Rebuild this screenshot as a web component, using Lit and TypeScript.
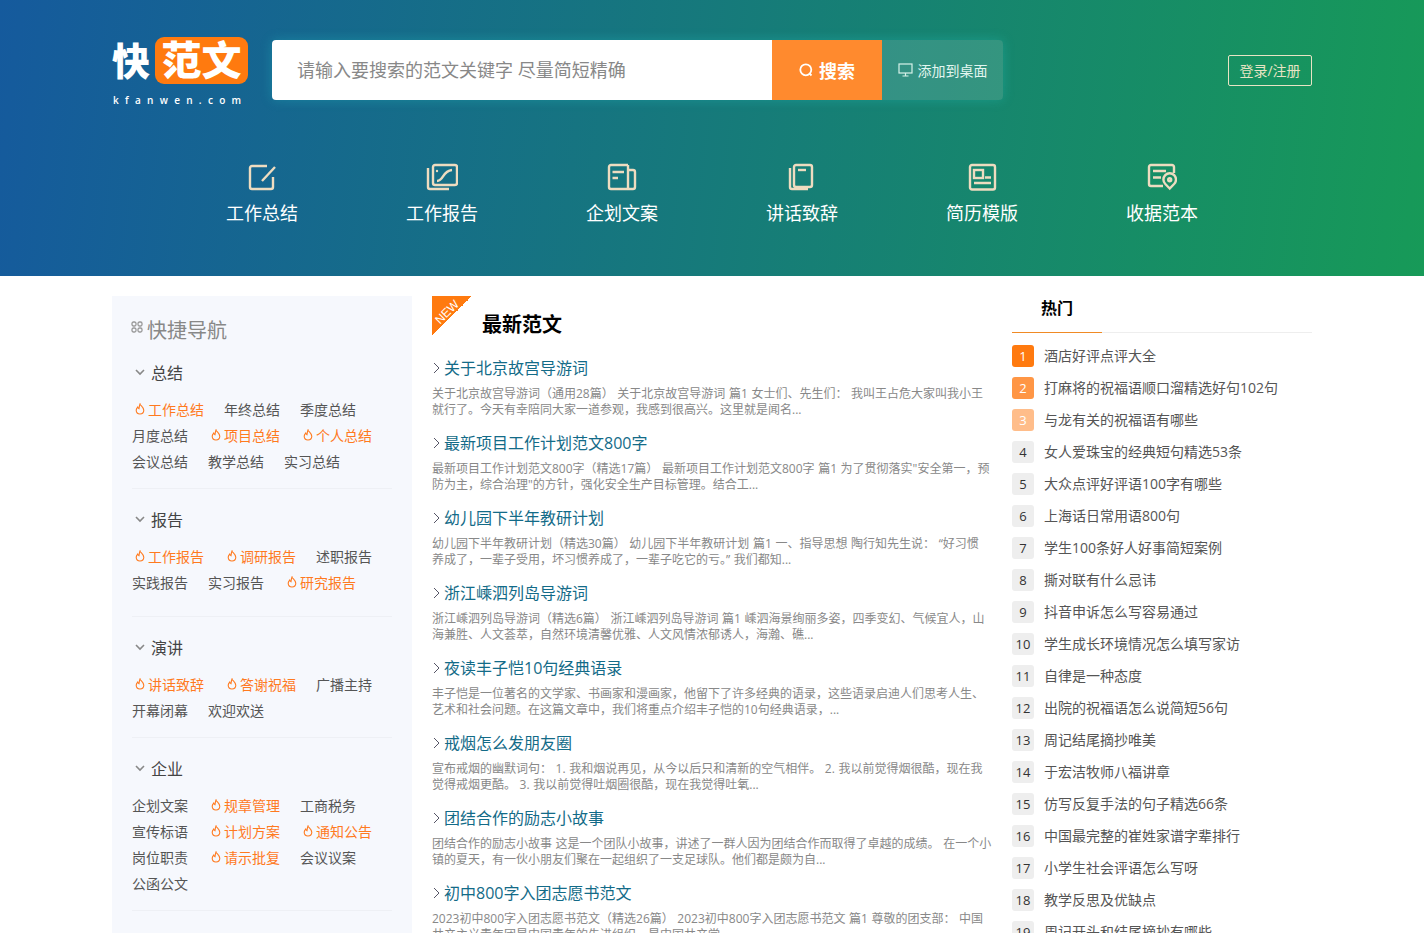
import { LitElement, html, css, svg } from 'lit';
import { customElement } from 'lit/decorators.js';

const navItems = [
  { label: '工作总结', w: 28, icon: svg`<path d="M19 3H4a2 2 0 0 0-2 2v19a2 2 0 0 0 2 2h19a2 2 0 0 0 2-2V14"/><path d="M27 4 14 18"/>` },
  { label: '工作报告', w: 32, icon: svg`<rect x="7" y="2" width="24" height="20" rx="2"/><path d="M2 5v19a2 2 0 0 0 2 2h19"/><path d="M11 18c7 0 5-10 15-11"/><circle cx="11" cy="8" r="1.200" fill="currentColor" stroke="none"/>` },
  { label: '企划文案', w: 30, icon: svg`<path d="M21 2H4a2 2 0 0 0-2 2v20a2 2 0 0 0 2 2h22a2 2 0 0 0 2-2V9a2 2 0 0 0-2-2h-5"/><path d="M21 2v24"/><path d="M5.500 9H17M5.500 15H11"/>` },
  { label: '讲话致辞', w: 28, icon: svg`<rect x="6" y="2" width="18" height="22" rx="2"/><path d="M2 5v19a2 2 0 0 0 2 2h16"/><path d="M10 7h8"/>` },
  { label: '简历模版', w: 29, icon: svg`<rect x="2" y="2" width="25" height="24.500" rx="2"/><rect x="6" y="7" width="9" height="8"/><path d="M17 14.500h6M6 20h17"/>` },
  { label: '收据范本', w: 30, icon: svg`<path d="M27 10V4a2 2 0 0 0-2-2H4a2 2 0 0 0-2 2v17a2 2 0 0 0 2 2h12"/><path d="M6 8h13M6 14.500h8"/><path d="M22.700 25.500 18.300 21a6.300 6.300 0 1 1 8.800 0z"/><circle cx="22.700" cy="16.800" r="1.500"/>` },
];

// 第二项为 1 的链接前面带火苗
const groups = [
  { name: '总结', links: [['工作总结', 1], ['年终总结'], ['季度总结'], ['月度总结'], ['项目总结', 1], ['个人总结', 1], ['会议总结'], ['教学总结'], ['实习总结']] },
  { name: '报告', roomy: true, links: [['工作报告', 1], ['调研报告', 1], ['述职报告'], ['实践报告'], ['实习报告'], ['研究报告', 1]] },
  { name: '演讲', links: [['讲话致辞', 1], ['答谢祝福', 1], ['广播主持'], ['开幕闭幕'], ['欢迎欢送']] },
  { name: '企业', links: [['企划文案'], ['规章管理', 1], ['工商税务'], ['宣传标语'], ['计划方案', 1], ['通知公告', 1], ['岗位职责'], ['请示批复', 1], ['会议议案'], ['公函公文']] },
];

const articles = [
  ['关于北京故宫导游词', '关于北京故宫导游词（通用28篇） 关于北京故宫导游词 篇1 女士们、先生们： 我叫王占危大家叫我小王\n就行了。今天有幸陪同大家一道参观，我感到很高兴。这里就是闻名...'],
  ['最新项目工作计划范文800字', '最新项目工作计划范文800字（精选17篇） 最新项目工作计划范文800字 篇1 为了贯彻落实"安全第一，预\n防为主，综合治理"的方针，强化安全生产目标管理。结合工...'],
  ['幼儿园下半年教研计划', '幼儿园下半年教研计划（精选30篇） 幼儿园下半年教研计划 篇1 一、指导思想 陶行知先生说： “好习惯\n养成了，一辈子受用，坏习惯养成了，一辈子吃它的亏。” 我们都知...'],
  ['浙江嵊泗列岛导游词', '浙江嵊泗列岛导游词（精选6篇） 浙江嵊泗列岛导游词 篇1 嵊泗海景绚丽多姿，四季变幻、气候宜人，山\n海兼胜、人文荟萃，自然环境清馨优雅、人文风情浓郁诱人，海瀚、礁...'],
  ['夜读丰子恺10句经典语录', '丰子恺是一位著名的文学家、书画家和漫画家，他留下了许多经典的语录，这些语录启迪人们思考人生、\n艺术和社会问题。在这篇文章中，我们将重点介绍丰子恺的10句经典语录，...'],
  ['戒烟怎么发朋友圈', '宣布戒烟的幽默词句： 1. 我和烟说再见，从今以后只和清新的空气相伴。 2. 我以前觉得烟很酷，现在我\n觉得戒烟更酷。 3. 我以前觉得吐烟圈很酷，现在我觉得吐氧...'],
  ['团结合作的励志小故事', '团结合作的励志小故事 这是一个团队小故事，讲述了一群人因为团结合作而取得了卓越的成绩。 在一个小\n镇的夏天，有一伙小朋友们聚在一起组织了一支足球队。他们都是颇为自...'],
  ['初中800字入团志愿书范文', '2023初中800字入团志愿书范文（精选26篇） 2023初中800字入团志愿书范文 篇1 尊敬的团支部： 中国\n共产主义青年团是中国青年的先进组织，是中国共产党...'],
];

const hotList = [
  '酒店好评点评大全', '打麻将的祝福语顺口溜精选好句102句', '与龙有关的祝福语有哪些', '女人爱珠宝的经典短句精选53条',
  '大众点评好评语100字有哪些', '上海话日常用语800句', '学生100条好人好事简短案例', '撕对联有什么忌讳',
  '抖音申诉怎么写容易通过', '学生成长环境情况怎么填写家访', '自律是一种态度', '出院的祝福语怎么说简短56句',
  '周记结尾摘抄唯美', '于宏洁牧师八福讲章', '仿写反复手法的句子精选66条', '中国最完整的崔姓家谱字辈排行',
  '小学生社会评语怎么写呀', '教学反思及优缺点', '周记开头和结尾摘抄有哪些',
];

const flame = html`<svg class="flame" viewBox="0 0 10 12"><path d="M5 1c.3 1.600 3.800 3.200 3.800 6.300A3.800 3.800 0 0 1 5 11a3.800 3.800 0 0 1-3.800-3.700C1.200 5.700 2 4.800 2.700 4c.2 1 .7 1.500 1.300 1.700C4.300 4.200 4.300 2.500 5 1z"/></svg>`;

@customElement('app-root')
export class AppRoot extends LitElement {
  static styles = css`
    :host {
      display: block;
      height: 933px;
      overflow: hidden;
      background: #fff;
      font-family: "Open Sans", "Noto Sans CJK SC", sans-serif;
      color: #555;
    }
    .hero {
      height: 276px;
      box-sizing: border-box;
      padding-top: 40px;
      background: linear-gradient(97deg, #155a9d 0%, #179a58 100%);
    }
    .wrap {
      width: 1200px;
      margin: 0 auto;
    }
    .top {
      display: flex;
      align-items: center;
      height: 60px;
    }
    .logo {
      width: 160px;
      flex: none;
      align-self: flex-start;
      margin-top: -3px;
      color: #fff;
    }
    .logo-mark {
      display: flex;
      align-items: center;
      gap: 5px;
      height: 47px;
      font-size: 38px;
      font-weight: 900;
      line-height: 45px;
    }
    .logo-box {
      width: 93px;
      height: 47px;
      border-radius: 9px;
      background: #ff7a0f;
      text-align: center;
      font-size: 40px;
      letter-spacing: 0;
    }
    .logo-sub {
      margin-top: 9px;
      padding-left: 1px;
      font-size: 10px;
      font-weight: 600;
      line-height: 14px;
      letter-spacing: 6.300px;
      white-space: nowrap;
    }
    .search {
      display: flex;
      height: 60px;
      box-shadow: 0 0 12px rgba(40, 200, 200, 0.3);
      border-radius: 4px;
    }
    .search input {
      width: 500px;
      box-sizing: border-box;
      border: 0;
      outline: 0;
      padding: 0 25px;
      font: inherit;
      font-size: 18px;
      border-radius: 4px 0 0 4px;
      background: #fff;
    }
    .search input::placeholder {
      color: #888;
      opacity: 1;
    }
    .search-btn {
      width: 110px;
      display: flex;
      align-items: center;
      justify-content: center;
      gap: 6px;
      background: #ff8a2e;
      color: #fff;
      font-size: 18px;
      font-weight: 700;
    }
    .search-btn svg {
      width: 14px;
      height: 14px;
      fill: none;
      stroke: #fff;
      stroke-width: 1.800;
    }
    .add-btn {
      width: 121px;
      display: flex;
      align-items: center;
      justify-content: center;
      gap: 5px;
      background: rgba(255, 255, 255, 0.13);
      border-radius: 0 4px 4px 0;
      color: #e3f6f0;
      font-size: 14px;
    }
    .add-btn svg {
      width: 15px;
      height: 14px;
      fill: none;
      stroke: #d8f2ea;
      stroke-width: 1.200;
    }
    .login {
      margin-left: auto;
      width: 84px;
      height: 31px;
      box-sizing: border-box;
      border: 1px solid #e8e4c4;
      border-radius: 2px;
      text-align: center;
      line-height: 29px;
      font-size: 14px;
      color: #e8e4c4;
    }
    .nav {
      display: grid;
      grid-template-columns: repeat(6, 180px);
      padding-left: 60px;
      margin-top: 63px;
    }
    .nav-item {
      display: flex;
      flex-direction: column;
      align-items: center;
    }
    .nav-item svg {
      height: 28px;
      fill: none;
      stroke: #eedcc0;
      color: #eedcc0;
      stroke-width: 2.400;
    }
    .nav-item span {
      margin-top: 10px;
      font-size: 18px;
      line-height: 24px;
      color: #fff;
    }
    .main {
      display: flex;
      gap: 20px;
      padding-top: 20px;
    }
    .side {
      width: 300px;
      flex: none;
      box-sizing: border-box;
      padding: 20px 20px 0;
      background: #f6f8fd;
      height: 700px;
    }
    .side-title {
      display: flex;
      margin-left: -1px;
      padding-top: 1px;
      font-size: 20px;
      line-height: 28px;
      color: #888;
      gap: 4px;
    }
    .side-title svg {
      width: 12px;
      height: 12px;
      margin-top: 4px;
      flex: none;
      fill: none;
      stroke: #999;
      stroke-width: 1.300;
    }
    .group {
      padding-bottom: 14px;
      border-bottom: 1px solid #eef0f5;
      margin-bottom: 19px;
    }
    .group.roomy {
      padding-bottom: 21px;
    }
    .side-title + .group {
      margin-top: 16px;
    }
    .group-name {
      display: flex;
      align-items: center;
      gap: 6px;
      height: 24px;
      box-sizing: border-box;
      padding: 0 0 2px 3px;
      font-size: 16px;
      color: #444;
    }
    .group-name svg {
      width: 10px;
      height: 7px;
      fill: none;
      stroke: #888;
      stroke-width: 1.600;
    }
    .links {
      display: flex;
      flex-wrap: wrap;
      column-gap: 20px;
      margin-top: 11px;
    }
    .links a {
      display: flex;
      align-items: center;
      height: 26px;
      font-size: 14px;
      color: #555;
    }
    .links a.hot {
      color: #ff7a1f;
    }
    .flame {
      width: 10px;
      height: 12px;
      margin: 0 3px 0 3px;
      fill: none;
      stroke: #ff7a1f;
      stroke-width: 1.100;
    }
    .center {
      width: 560px;
      flex: none;
      position: relative;
    }
    .ribbon {
      position: absolute;
      left: 0;
      top: 0;
      width: 40px;
      height: 40px;
      background: linear-gradient(135deg, #ff7a0f 50%, transparent 50%);
    }
    .ribbon span {
      position: absolute;
      left: 0;
      top: 9px;
      width: 30px;
      text-align: center;
      font-family: "Liberation Sans", sans-serif;
      font-size: 12px;
      line-height: 14px;
      color: #fff;
      transform: rotate(-45deg);
    }
    .center h2 {
      margin: 15px 0 0;
      padding-left: 50px;
      font-size: 20px;
      line-height: 28px;
      font-weight: 700;
      color: #000;
    }
    .article {
      margin-top: 17px;
    }
    .article + .article {
      margin-top: 13px;
    }
    .article-title {
      display: flex;
      align-items: center;
      gap: 2px;
      height: 24px;
      box-sizing: border-box;
      padding-bottom: 2px;
      font-size: 16px;
      color: #136b88;
    }
    .article-title svg {
      width: 10px;
      height: 12px;
      margin-top: 2px;
      fill: none;
      stroke: #556;
      stroke-width: 1;
    }
    .article p {
      margin: 6px 0 0;
      font-size: 12px;
      line-height: 16px;
      color: #888;
      height: 32px;
      overflow: hidden;
      white-space: pre-line;
      word-spacing: 0.500px;
    }
    .right {
      width: 300px;
      flex: none;
    }
    .right-head {
      position: relative;
      height: 36px;
      padding-left: 29px;
      border-bottom: 1px solid #eee;
      font-size: 16px;
      font-weight: 700;
      line-height: 24px;
      color: #000;
    }
    .right-head::after {
      content: "";
      position: absolute;
      left: 0;
      bottom: -1px;
      width: 90px;
      height: 1px;
      background: #f08a24;
    }
    .hot-list {
      margin-top: 7px;
    }
    .hot-row {
      display: flex;
      align-items: center;
      gap: 10px;
      height: 32px;
      font-size: 14px;
      color: #555;
      white-space: nowrap;
    }
    .hot-row .txt {
      margin-bottom: 2px;
    }
    .num {
      width: 22px;
      height: 22px;
      flex: none;
      border-radius: 3px;
      background: #eeeeee;
      color: #333;
      text-align: center;
      font-size: 13px;
      line-height: 22px;
    }
    .num.n1 { background: #ff7a0f; color: #fff; }
    .num.n2 { background: #ff9645; color: #fff; }
    .num.n3 { background: #ffbd8a; color: #fff; }
  `;

  render() {
    return html`
      <div class="hero">
        <div class="wrap">
          <div class="top">
            <div class="logo">
              <div class="logo-mark"><span>快</span><span class="logo-box">范文</span></div>
              <div class="logo-sub">kfanwen.com</div>
            </div>
            <div class="search">
              <input placeholder="请输入要搜索的范文关键字 尽量简短精确" />
              <div class="search-btn">
                <svg viewBox="0 0 14 14"><circle cx="6.800" cy="6.800" r="5.500"/><path d="m10.500 10.500 2 2"/></svg>
                搜索
              </div>
              <div class="add-btn">
                <svg viewBox="0 0 15 14"><rect x="1" y="1" width="13" height="9"/><path d="M7.500 10v3M4.500 13h6"/></svg>
                添加到桌面
              </div>
            </div>
            <div class="login">登录/注册</div>
          </div>
          <div class="nav">
            ${navItems.map(n => html`
              <div class="nav-item">
                <svg style="width:${n.w}px" viewBox="0 0 ${n.w} 28">${n.icon}</svg>
                <span>${n.label}</span>
              </div>`)}
          </div>
        </div>
      </div>
      <div class="wrap main">
        <div class="side">
          <div class="side-title">
            <svg viewBox="0 0 12 12"><rect x="1" y="1" width="4" height="4" rx="1.500"/><rect x="7" y="1" width="4" height="4" rx="1.500"/><rect x="1" y="7" width="4" height="4" rx="1.500"/><rect x="7" y="7" width="4" height="4" rx="1.500"/></svg>
            快捷导航
          </div>
          ${groups.map(g => html`
            <div class="group ${g.roomy ? 'roomy' : ''}">
              <div class="group-name">
                <svg viewBox="0 0 10 7"><path d="m1 1 4 4 4-4"/></svg>
                ${g.name}
              </div>
              <div class="links">
                ${g.links.map(l => html`<a class=${l[1] ? 'hot' : ''}>${l[1] ? flame : ''}${l[0]}</a>`)}
              </div>
            </div>`)}
        </div>
        <div class="center">
          <div class="ribbon"><span>NEW</span></div>
          <h2>最新范文</h2>
          ${articles.map(a => html`
            <div class="article">
              <div class="article-title">
                <svg viewBox="0 0 10 12"><path d="m2 1 5 5-5 5"/></svg>
                ${a[0]}
              </div>
              <p>${a[1]}</p>
            </div>`)}
        </div>
        <div class="right">
          <div class="right-head">热门</div>
          <div class="hot-list">
            ${hotList.map((t, i) => html`
              <div class="hot-row">
                <span class="num n${i + 1}">${i + 1}</span>
                <span class="txt">${t}</span>
              </div>`)}
          </div>
        </div>
      </div>
    `;
  }
}
